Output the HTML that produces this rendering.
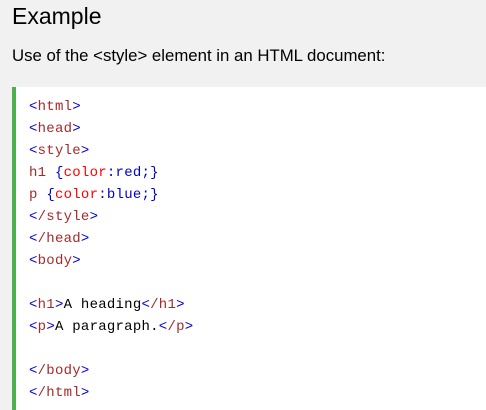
<!DOCTYPE html>
<html><head><style>
body{margin:0;background:#f1f1f1;width:486px;height:410px;overflow:hidden;font-family:"Liberation Sans",sans-serif;color:#000}
h2{margin:0;position:absolute;left:12px;top:0px;font-weight:normal;font-size:23px;line-height:32px}
p.d{position:absolute;left:12px;top:45px;margin:0;font-size:16.8px;line-height:22px}
.code{position:absolute;left:12px;top:87px;right:0;bottom:0;background:#fff;border-left:4px solid #4caf50}
pre{margin:0;position:absolute;left:13px;top:9px;font-family:"Liberation Mono",monospace;font-size:14px;line-height:22px;letter-spacing:0.25px}
.b{color:#0000cd}.t{color:#a52a2a}.r{color:#ff0000}
</style></head><body>
<h2>Example</h2>
<p class="d">Use of the &lt;style&gt; element in an HTML document:</p>
<div class="code"><pre><span class="b">&lt;</span><span class="t">html</span><span class="b">&gt;</span>
<span class="b">&lt;</span><span class="t">head</span><span class="b">&gt;</span>
<span class="b">&lt;</span><span class="t">style</span><span class="b">&gt;</span>
<span class="t">h1 </span><span class="b">{</span><span class="r">color</span><span class="b">:red;}</span>
<span class="t">p </span><span class="b">{</span><span class="r">color</span><span class="b">:blue;}</span>
<span class="b">&lt;</span><span class="t">/style</span><span class="b">&gt;</span>
<span class="b">&lt;</span><span class="t">/head</span><span class="b">&gt;</span>
<span class="b">&lt;</span><span class="t">body</span><span class="b">&gt;</span>

<span class="b">&lt;</span><span class="t">h1</span><span class="b">&gt;</span>A heading<span class="b">&lt;</span><span class="t">/h1</span><span class="b">&gt;</span>
<span class="b">&lt;</span><span class="t">p</span><span class="b">&gt;</span>A paragraph.<span class="b">&lt;</span><span class="t">/p</span><span class="b">&gt;</span>

<span class="b">&lt;</span><span class="t">/body</span><span class="b">&gt;</span>
<span class="b">&lt;</span><span class="t">/html</span><span class="b">&gt;</span></pre></div>
</body></html>
